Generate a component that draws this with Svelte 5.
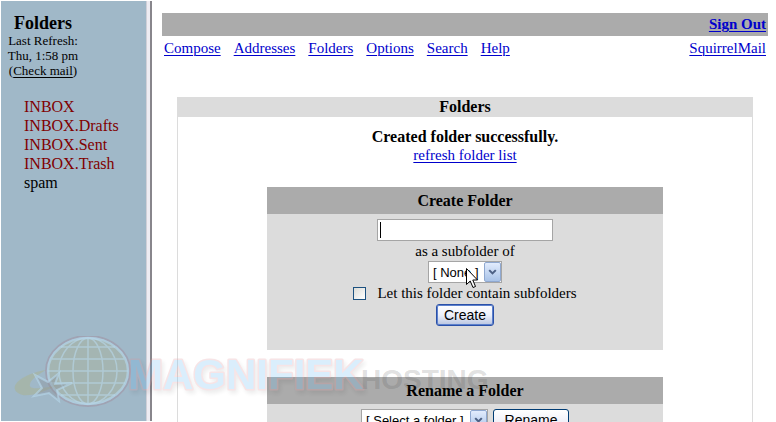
<script>
  const mailboxes = [
    { name: "INBOX", special: true },
    { name: "INBOX.Drafts", special: true },
    { name: "INBOX.Sent", special: true },
    { name: "INBOX.Trash", special: true },
    { name: "spam", special: false },
  ];
  const menu = ["Compose", "Addresses", "Folders", "Options", "Search", "Help"];

  let folderName = $state("");
  let parent = $state("none");
  let hasChildren = $state(false);
  let renameTarget = $state("none");
</script>

{#snippet arrow()}
  <span class="select__arrow">
    <svg viewBox="0 0 16 18" width="16" height="18" aria-hidden="true">
      <path d="M4.5 7 L8 10.5 L11.5 7" fill="none" stroke="#4d6185" stroke-width="2.2" />
    </svg>
  </span>
{/snippet}

<div class="frames">
  <aside class="side">
    <div class="side__head">
      <h2>Folders</h2>
      <p>Last Refresh:<br />Thu, 1:58 pm<br />(<a href="#check">Check mail</a>)</p>
    </div>
    <ul class="side__list">
      {#each mailboxes as box}
        <li><a href="#{box.name}" class:special={box.special}>{box.name}</a></li>
      {/each}
    </ul>
  </aside>
  <div class="splitter"></div>

  <main class="main">
    <div class="topbar"><a href="#signout">Sign Out</a></div>
    <nav class="menu">
      {#each menu as item}
        <a href="#{item}">{item}</a>
      {/each}
      <a class="menu__home" href="#home">SquirrelMail</a>
    </nav>

    <section class="panel">
      <h1>Folders</h1>
      <div class="panel__body">
        <p class="notice">
          <strong>Created folder successfully.</strong>
          <a href="#refresh">refresh folder list</a>
        </p>

        <form class="box" onsubmit={(e) => e.preventDefault()}>
          <h3>Create Folder</h3>
          <div class="box__body">
            <div class="field">
              <input class="text" type="text" aria-label="Folder name" bind:value={folderName} />
              <span class="caret"></span>
            </div>
            <label class="line" for="parent">as a subfolder of</label>
            <div class="select">
              <select id="parent" bind:value={parent}>
                <option value="none">[ None ]</option>
              </select>
              {@render arrow()}
              <svg class="pointer" viewBox="0 0 12 21" width="12" height="21" aria-hidden="true">
                <path
                  d="M.5 .5 V16.5 L4.2 13 L7 19.5 L9.5 18.5 L6.8 12 H11.5 Z"
                  fill="#fff"
                  stroke="#000"
                />
              </svg>
            </div>
            <label class="check">
              <input type="checkbox" bind:checked={hasChildren} />
              Let this folder contain subfolders
            </label>
            <button class="btn btn--default">Create</button>
          </div>
        </form>

        <form class="box" onsubmit={(e) => e.preventDefault()}>
          <h3>Rename a Folder</h3>
          <div class="box__body box__body--row">
            <div class="select select--wide">
              <select aria-label="Folder to rename" bind:value={renameTarget}>
                <option value="none">[ Select a folder ]</option>
              </select>
              {@render arrow()}
            </div>
            <button class="btn btn--wide">Rename</button>
          </div>
        </form>
      </div>
    </section>
  </main>

  <svg class="watermark" viewBox="0 0 490 86" width="490" height="86" aria-hidden="true">
    <path
      d="M46 34 C22 38 8 50 18 57 C26 63 44 56 58 49 C40 53 28 54 30 48 C31 43 38 39 46 34Z"
      fill="#b5b060"
      opacity=".28"
    />
    <ellipse cx="88" cy="35" rx="42" ry="35" fill="none" stroke="#a05060" stroke-width="2" opacity=".2" />
    <ellipse cx="88" cy="35" rx="40" ry="33" fill="#b0b080" fill-opacity=".3" stroke="#b8d8ec" stroke-width="2.5" stroke-opacity=".6" />
    <g fill="none" stroke="#b8d8ec" stroke-width="1.5" opacity=".6">
      <ellipse cx="88" cy="35" rx="29" ry="33" />
      <ellipse cx="88" cy="35" rx="15" ry="33" />
      <path d="M88 2V68M61 11H115M52 23H124M48 35H128M51 47H125M61 59H115" />
    </g>
    <path
      d="M35 39 L48 46 L59 37 L55 48 L72 47 L57 54 L59 65 L49 57 L34 60 L42 52Z"
      fill="#8a9098"
      fill-opacity=".4"
      stroke="#b8d8ec"
      stroke-opacity=".6"
      stroke-width="2"
    />
    <text class="mark" x="128" y="53">MAGNIFIEK</text>
    <text class="mark-sub" x="361" y="53">HOSTING</text>
  </svg>
</div>

<style>
  :global(body) {
    background: #fff;
  }
  .frames {
    position: relative;
    display: flex;
    box-sizing: border-box;
    height: 100vh;
    padding: 1px 8px 1px 1px;
    overflow: hidden;
    font: 15px/19px "Liberation Serif", "Times New Roman", serif;
    color: #000;
  }
  h1, h2, h3, p, ul {
    margin: 0;
    padding: 0;
  }
  a {
    color: #0000cc;
    text-decoration-thickness: 1px;
    text-underline-offset: 2px;
  }

  .side {
    flex: 0 0 145px;
    background: #a0b8c8;
  }
  .side__head {
    width: 84px;
    padding-top: 12px;
    text-align: center;
  }
  .side h2 {
    font-size: 18px;
    line-height: 20px;
  }
  .side p {
    font-size: 13px;
    line-height: 15px;
  }
  .side p a {
    color: #000;
  }
  .side__list {
    margin-top: 19px;
    padding-left: 23px;
    font-size: 16px;
    list-style: none;
  }
  .side__list a {
    color: #000;
    text-decoration: none;
  }
  .side__list .special {
    color: #800000;
  }
  .splitter {
    flex: 0 0 3px;
    border-left: 1px solid #d0d0d8;
    border-right: 2px solid #88868c;
    background: #eeecf2;
  }

  .main {
    flex: 1;
    min-width: 0;
    padding: 12px 0 0 10px;
  }
  .topbar {
    padding: 2px;
    background: #ababab;
    font-weight: bold;
    text-align: right;
  }
  .menu {
    display: flex;
    gap: 13px;
    padding: 3px 2px 0;
  }
  .menu__home {
    margin-left: auto;
  }

  .panel {
    width: 95%;
    margin: 39px auto 0;
  }
  .panel h1 {
    background: #dcdcdc;
    font-size: 16px;
    line-height: 20px;
    text-align: center;
  }
  .panel__body {
    min-height: 320px;
    padding: 10px 4px 0;
    border: 1px solid #dcdcdc;
    border-top: 0;
  }
  .notice {
    display: flex;
    flex-direction: column;
    align-items: center;
  }
  .notice strong {
    font-size: 16px;
  }
  .box {
    width: 70%;
    margin: 22px auto 0;
    background: #dcdcdc;
  }
  .box + .box {
    margin-top: 27px;
  }
  .box h3 {
    background: #ababab;
    font-size: 16px;
    line-height: 27px;
    text-align: center;
  }
  .box__body {
    display: flex;
    flex-direction: column;
    align-items: center;
    padding: 5px 0 24px;
  }
  .box__body--row {
    flex-direction: row;
    justify-content: center;
    gap: 5px;
  }
  .field {
    position: relative;
  }
  .text {
    display: block;
    box-sizing: border-box;
    width: 176px;
    height: 22px;
    border: 1px solid #a5a5a5;
    background: #fff;
    font: 13px "Liberation Sans", Arial, sans-serif;
    outline: 0;
  }
  .caret {
    position: absolute;
    top: 3px;
    left: 3px;
    width: 1px;
    height: 16px;
    background: #000;
  }
  .line {
    line-height: 20px;
  }

  .select {
    position: relative;
    width: 74px;
    height: 22px;
  }
  .select--wide {
    width: 127px;
  }
  .select select {
    appearance: none;
    display: block;
    box-sizing: border-box;
    width: 100%;
    height: 100%;
    margin: 0;
    padding: 0 0 0 4px;
    border: 1px solid #a5a5a5;
    border-radius: 0;
    background: #fff;
    color: #000;
    font: 13px "Liberation Sans", Arial, sans-serif;
  }
  .select__arrow {
    position: absolute;
    top: 1px;
    right: 1px;
    display: flex;
    box-sizing: border-box;
    width: 17px;
    height: 20px;
    align-items: center;
    justify-content: center;
    border: 1px solid #8fa8d0;
    border-radius: 2px;
    background: linear-gradient(#e2ecfd, #a9c3e8);
    pointer-events: none;
  }
  .pointer {
    position: absolute;
    top: 7px;
    left: 38px;
  }

  .check {
    display: flex;
    align-items: center;
    gap: 11px;
    line-height: 21px;
  }
  .check input {
    appearance: none;
    box-sizing: border-box;
    width: 13px;
    height: 13px;
    margin: 0;
    border: 1px solid #1c5180;
    background: linear-gradient(135deg, #dcdcd7, #fff);
  }
  .btn {
    box-sizing: border-box;
    width: 58px;
    height: 22px;
    padding: 0;
    border: 1px solid #003c74;
    border-radius: 3px;
    background: linear-gradient(#fff, #f0f0f8 60%, #c8cce0);
    color: #000;
    font: 14px "Liberation Sans", Arial, sans-serif;
  }
  .btn--default {
    border-color: #2a50a8;
    background: linear-gradient(#fff, #ecf0fa 50%, #b8c4e0);
    box-shadow: inset 0 0 0 1px #5c80cc;
  }
  .btn--wide {
    width: 76px;
  }

  .watermark {
    position: absolute;
    bottom: 0;
    left: 0;
    pointer-events: none;
  }
  .mark {
    fill: #68bcf4;
    stroke: #e09098;
    stroke-width: 3px;
    stroke-linejoin: round;
    paint-order: stroke;
    opacity: 0.24;
    filter: drop-shadow(2px 3px 2px rgba(0, 0, 0, 0.3));
    font: bold 42px "Liberation Sans", sans-serif;
  }
  .mark-sub {
    fill: rgba(70, 70, 70, 0.18);
    font: bold 28px "Liberation Sans", sans-serif;
  }
</style>
